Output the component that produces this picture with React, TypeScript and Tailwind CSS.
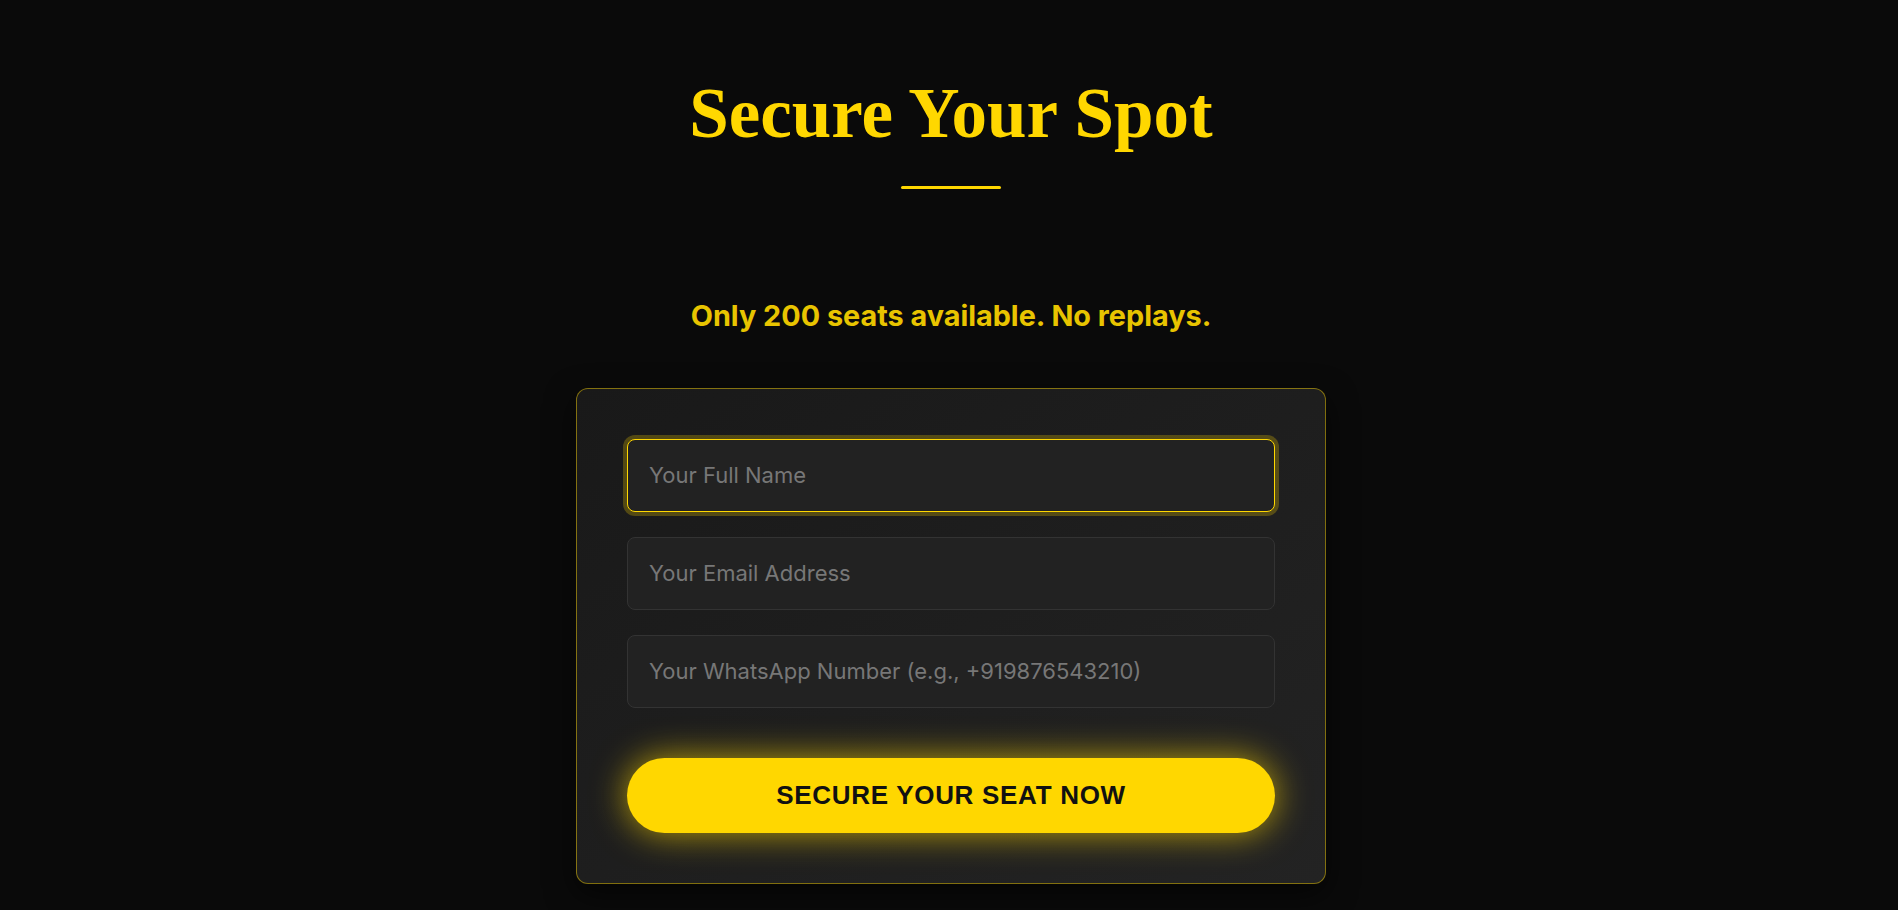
import { useState } from 'react'

// Registration block - тёмная тема, золотые акценты
export default function App() {
  const [form, setForm] = useState({ name: '', email: '', phone: '' })

  const inputBase =
    "block w-full h-[73px] rounded-lg bg-[#222222] pl-[21px] pr-5 text-[22px] text-white placeholder:text-[#777777] outline-none font-['Inter',sans-serif]"

  return (
    <div className="min-h-screen w-full bg-[#0a0a0a] font-['Inter',sans-serif]">
      <section className="flex flex-col items-center pt-[78px] pb-10 pl-[4px]">
        <h1 className="text-[71px] leading-none font-bold text-[#ffd700] font-['Liberation_Serif',serif]">
          Secure Your Spot
        </h1>
        <div className="mt-[37px] h-[3px] w-[100px] rounded-full bg-[#ffd700]" />

        <p className="mt-[113px] text-[28.8px] leading-none font-bold text-[#e8c400]">
          Only 200 seats available. No replays.
        </p>

        {/* Form card */}
        <div className="mt-[57px] w-[750px] rounded-xl border border-[#ffd700]/45 bg-gradient-to-br from-[#191919] to-[#232323] p-[50px] shadow-[0_10px_30px_rgba(0,0,0,0.6)]">
          <form className="flex flex-col gap-[25px]" onSubmit={(e) => e.preventDefault()}>
            <input
              autoFocus
              type="text"
              placeholder="Your Full Name"
              value={form.name}
              onChange={(e) => setForm({ ...form, name: e.target.value })}
              className={`${inputBase} border border-[#ffd700] shadow-[0_0_0_4px_rgba(255,215,0,0.25)]`}
            />
            <input
              type="email"
              placeholder="Your Email Address"
              value={form.email}
              onChange={(e) => setForm({ ...form, email: e.target.value })}
              className={`${inputBase} border border-[#333333]`}
            />
            <input
              type="tel"
              placeholder="Your WhatsApp Number (e.g., +919876543210)"
              value={form.phone}
              onChange={(e) => setForm({ ...form, phone: e.target.value })}
              className={`${inputBase} border border-[#333333]`}
            />
            <button
              type="submit"
              className="mt-[25px] h-[75px] w-full rounded-full bg-[#ffd700] text-[26px] font-bold uppercase tracking-[0.7px] text-[#111111] font-['Liberation_Sans',Arial,sans-serif] shadow-[0_0_35px_rgba(255,215,0,0.7)]"
            >
              Secure Your Seat Now
            </button>
          </form>
        </div>
      </section>
    </div>
  )
}
